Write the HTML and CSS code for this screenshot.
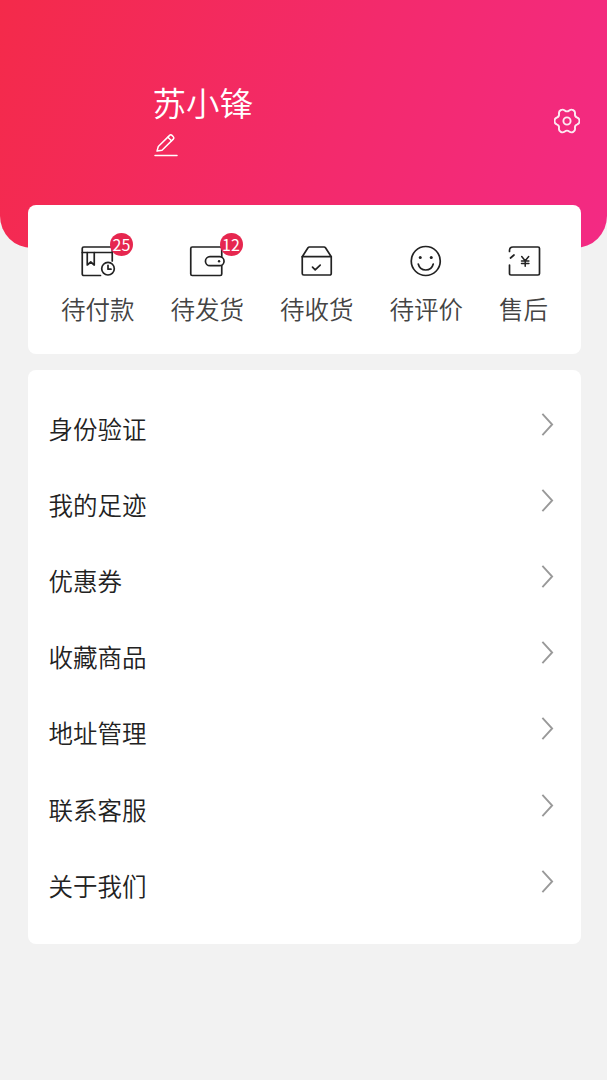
FILE: index.html
```html
<!DOCTYPE html>
<html lang="zh-CN">
<head>
<meta charset="utf-8">
<title>我的</title>
<link rel="stylesheet" href="styles.css">
</head>
<body>
<div class="page">
  <header class="hero">
    <div class="profile">
      <div class="name">苏小锋</div>
      <svg class="edit" viewBox="0 0 24 24" fill="none" stroke="currentColor" stroke-width="1.5" stroke-linejoin="round" stroke-linecap="round">
        <path d="M3 18.600l1.300-4.600L15.600 2.900a1.700 1.700 0 0 1 2.400 0l1.300 1.300a1.700 1.700 0 0 1 0 2.400L8 17.700z"/>
        <path d="M13.900 4.700l3.600 3.600"/>
        <path d="M1 23h22"/>
      </svg>
    </div>
    <svg class="gear" viewBox="0 0 26 26" fill="none" stroke="currentColor" stroke-width="1.900" stroke-linejoin="round">
      <path d="M23.270 9.660A3.600 3.600 0 0 1 23.270 16.340A3.500 3.500 0 0 0 21.030 20.230A3.600 3.600 0 0 1 15.250 23.560A3.500 3.500 0 0 0 10.750 23.560A3.600 3.600 0 0 1 4.970 20.230A3.500 3.500 0 0 0 2.730 16.340A3.600 3.600 0 0 1 2.730 9.660A3.500 3.500 0 0 0 4.970 5.770A3.600 3.600 0 0 1 10.750 2.440A3.500 3.500 0 0 0 15.250 2.440A3.600 3.600 0 0 1 21.030 5.770A3.500 3.500 0 0 0 23.270 9.660Z"/>
      <circle cx="13" cy="13" r="3.600"/>
    </svg>
  </header>

  <section class="card orders">
    <div class="order">
      <div class="icon-wrap">
        <svg class="icon" viewBox="0 0 36 32" fill="none" stroke="#222" stroke-width="1.700" stroke-linejoin="round" stroke-linecap="round">
          <path d="M20.500 30.500H3.750A1.500 1.500 0 0 1 2.250 29V3.500A1.500 1.500 0 0 1 3.750 2h27a1.500 1.500 0 0 1 1.500 1.500V16"/>
          <path d="M2.250 7.500h30"/>
          <path d="M7.250 7.500v12.500l3.500-3 3.500 3V7.500"/>
          <circle cx="28" cy="23.700" r="6.300"/>
          <path d="M28 20.300v3.900h3"/>
        </svg>
        <span class="badge">25</span>
      </div>
      <span class="order-label">待付款</span>
    </div>
    <div class="order">
      <div class="icon-wrap">
        <svg class="icon" viewBox="-.25 0 36 32" fill="none" stroke="#222" stroke-width="1.700" stroke-linejoin="round" stroke-linecap="round">
          <path d="M32.500 11.700V3.500A1.500 1.500 0 0 0 31 2H3A1.500 1.500 0 0 0 1.500 3.500v25.500A1.500 1.500 0 0 0 3 30.500h28a1.500 1.500 0 0 0 1.500-1.500V20.700"/>
          <rect x="16.200" y="11.700" width="18.600" height="9" rx="4.500"/>
          <circle cx="29.800" cy="16.200" r="1.200" fill="#222" stroke="none"/>
        </svg>
        <span class="badge">12</span>
      </div>
      <span class="order-label">待发货</span>
    </div>
    <div class="order">
      <div class="icon-wrap">
        <svg class="icon" viewBox="-.5 0 36 32" fill="none" stroke="#222" stroke-width="1.700" stroke-linejoin="round" stroke-linecap="round">
          <path d="M2.750 11.700V28.500A1.500 1.500 0 0 0 4.250 30h26a1.500 1.500 0 0 0 1.500-1.500V11.700"/>
          <path d="M2.750 11.700L8.500 2.800A2 2 0 0 1 10 2h14.500a2 2 0 0 1 1.500 .800l5.750 8.900z"/>
          <path d="M13 22.200l2.700 2.600 5-4.600"/>
        </svg>
      </div>
      <span class="order-label">待收货</span>
    </div>
    <div class="order">
      <div class="icon-wrap">
        <svg class="icon" viewBox="-.75 0 36 32" fill="none" stroke="#222" stroke-width="1.700" stroke-linecap="round">
          <circle cx="17" cy="16" r="14.500"/>
          <circle cx="11.500" cy="12.500" r="1.500" fill="#222" stroke="none"/>
          <circle cx="22.500" cy="12.500" r="1.500" fill="#222" stroke="none"/>
          <path d="M9.500 19c1 4 4 6 7.500 6s6.500-2 7.500-6"/>
        </svg>
      </div>
      <span class="order-label">待评价</span>
    </div>
    <div class="order">
      <div class="icon-wrap">
        <svg class="icon" viewBox="-1 0 36 32" fill="none" stroke="#222" stroke-width="1.700" stroke-linejoin="round" stroke-linecap="round">
          <path d="M2.500 6.500V5.500Q2.500 2 6 2H31a1.500 1.500 0 0 1 1.500 1.500V28.500A1.500 1.500 0 0 1 31 30H4a1.500 1.500 0 0 1-1.500-1.500V20"/>
          <path d="M3.500 13l3.500-3"/>
          <path d="M14.700 11.500l3.500 4.200 3.500-4.200M14.500 16h7.400M14.500 18.500h7.400M18.200 15.700v5.500" stroke-width="1.500"/>
        </svg>
      </div>
      <span class="order-label">售后</span>
    </div>
  </section>

  <section class="card menu">
    <div class="row"><span>身份验证</span><svg class="chev" viewBox="0 0 14 26" fill="none" stroke="#999" stroke-width="2"><path d="M1.500 1.500L12 13 1.500 24.500"/></svg></div>
    <div class="row"><span>我的足迹</span><svg class="chev" viewBox="0 0 14 26" fill="none" stroke="#999" stroke-width="2"><path d="M1.500 1.500L12 13 1.500 24.500"/></svg></div>
    <div class="row"><span>优惠券</span><svg class="chev" viewBox="0 0 14 26" fill="none" stroke="#999" stroke-width="2"><path d="M1.500 1.500L12 13 1.500 24.500"/></svg></div>
    <div class="row"><span>收藏商品</span><svg class="chev" viewBox="0 0 14 26" fill="none" stroke="#999" stroke-width="2"><path d="M1.500 1.500L12 13 1.500 24.500"/></svg></div>
    <div class="row"><span>地址管理</span><svg class="chev" viewBox="0 0 14 26" fill="none" stroke="#999" stroke-width="2"><path d="M1.500 1.500L12 13 1.500 24.500"/></svg></div>
    <div class="row"><span>联系客服</span><svg class="chev" viewBox="0 0 14 26" fill="none" stroke="#999" stroke-width="2"><path d="M1.500 1.500L12 13 1.500 24.500"/></svg></div>
    <div class="row"><span>关于我们</span><svg class="chev" viewBox="0 0 14 26" fill="none" stroke="#999" stroke-width="2"><path d="M1.500 1.500L12 13 1.500 24.500"/></svg></div>
  </section>
</div>
</body>
</html>
```
FILE: styles.css
```css
* { box-sizing: border-box; }

html, body {
  margin: 0;
  height: 100%;
}

body {
  background: #f2f2f2;
  font-family: "Noto Sans CJK SC", "Noto Sans", sans-serif;
  color: #222;
}

.page {
  display: flex;
  flex-direction: column;
  min-height: 1080px;
}

.hero {
  height: 248px;
  display: flex;
  justify-content: space-between;
  align-items: flex-start;
  padding: 79px 27px 0 152.500px;
  color: #fff;
  background: linear-gradient(110deg, #f42a4a 0%, #f32a6c 55%, #f32a84 100%);
  border-radius: 0 0 32px 32px;
}

.profile {
  display: flex;
  flex-direction: column;
}

.name {
  font-size: 33.500px;
  line-height: 46px;
  font-weight: 350;
}

.edit {
  width: 24px;
  height: 25px;
  margin-top: 7px;
  margin-left: 1px;
  color: #fff;
}

.gear {
  width: 26px;
  height: 26px;
  margin-top: 29px;
  color: #fff;
  opacity: .9;
}

.card {
  background: #fff;
  border-radius: 8px;
  margin: 0 26px 0 28px;
}

.orders {
  height: 149px;
  margin-top: -43px;
  display: flex;
  gap: 36px;
  padding: 40px 0 0 33px;
  position: relative;
}

.order {
  display: flex;
  flex-direction: column;
  align-items: center;
}

.icon-wrap {
  position: relative;
  width: 36px;
  height: 32px;
}

.icon {
  display: block;
  width: 36px;
  height: 32px;
}

.badge {
  position: absolute;
  top: -12px;
  left: 30.250px;
  width: 23px;
  height: 23px;
  border-radius: 50%;
  background: #e6274f;
  color: #fff;
  font-size: 16px;
  line-height: 23px;
  text-align: center;
  font-weight: 400;
}

.order-label {
  margin-top: 14px;
  font-size: 24.500px;
  line-height: 36px;
  color: #444;
  font-weight: 350;
  white-space: nowrap;
}

.menu {
  height: 574px;
  margin-top: 16px;
  padding: 20px 0 0 20.500px;
}

.row {
  height: 76.200px;
  display: flex;
  justify-content: space-between;
  align-items: center;
  padding-right: 27px;
  font-size: 24.500px;
  font-weight: 350;
  color: #222;
}

.chev {
  width: 13px;
  height: 25px;
  margin-top: -8px;
}
```
